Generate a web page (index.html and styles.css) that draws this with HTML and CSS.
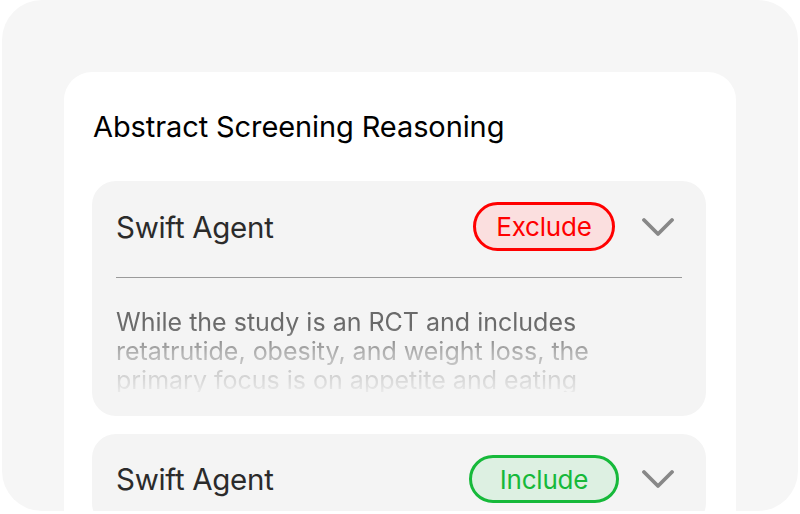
FILE: index.html
```html
<!DOCTYPE html>
<html>
<head>
<meta charset="utf-8">
<link rel="stylesheet" href="styles.css">
</head>
<body>
<div class="panel">
  <div class="card">
    <h1 class="title">Abstract Screening Reasoning</h1>
    <div class="item">
      <div class="head">
        <span class="agent">Swift Agent</span>
        <span class="pill pill-exclude">Exclude</span>
        <svg class="chev" width="32" height="20" viewBox="0 0 32 20"><polyline points="2,3 16,17 30,3" fill="none" stroke="#888" stroke-width="3.8" stroke-linecap="round" stroke-linejoin="round"/></svg>
      </div>
      <div class="divider"></div>
      <p class="reason">While the study is an RCT and includes retatrutide, obesity, and weight loss, the primary focus is on appetite and eating behavior rather than weight outcomes.</p>
    </div>
    <div class="item">
      <div class="head">
        <span class="agent">Swift Agent</span>
        <span class="pill pill-include">Include</span>
        <svg class="chev" width="32" height="20" viewBox="0 0 32 20"><polyline points="2,3 16,17 30,3" fill="none" stroke="#888" stroke-width="3.8" stroke-linecap="round" stroke-linejoin="round"/></svg>
      </div>
    </div>
  </div>
</div>
</body>
</html>
```
FILE: styles.css
```css
* { box-sizing: border-box; }
html, body { margin: 0; padding: 0; background: #fff; }
body { font-family: Inter, "Noto Sans", sans-serif; }

.panel {
  margin: 0 2px;
  height: 511px;
  border-radius: 40px;
  background: #f6f6f6;
  overflow: hidden;
  padding: 72px 62px 0 62px;
}

.card {
  background: #fff;
  border-radius: 28px 28px 0 0;
  padding: 37px 30px 40px 28px;
  min-height: 600px;
}

.title {
  margin: 0 0 37px 1px;
  font-size: 29px;
  line-height: 35px;
  font-weight: 400;
  color: #000;
  letter-spacing: -0.1px;
}

.item {
  background: #f4f4f4;
  border-radius: 24px;
  padding: 21px 32px 24px 24px;
  margin-bottom: 18px;
}

.head {
  display: flex;
  align-items: center;
}

.agent {
  flex: 1;
  font-size: 29.5px;
  line-height: 36px;
  color: #2b2b2b;
  letter-spacing: -0.3px;
}

.pill {
  display: flex;
  align-items: center;
  justify-content: center;
  border-radius: 25px;
  border: 3px solid;
  font-size: 26px;
  letter-spacing: -0.2px;
}

.pill-exclude {
  width: 142px;
  height: 49px;
  border-color: #ff0000;
  background: #fbdfdf;
  color: #ff0000;
  margin-right: 27px;
}

.pill-include {
  width: 150px;
  height: 48px;
  border-color: #16b93a;
  background: #ddf0e2;
  color: #16b93a;
  margin-right: 23px;
}

.chev { display: block; }

.divider {
  height: 1px;
  background: #9a9a9a;
  margin: 26px -8px 0 0;
}

.reason {
  margin: 30px 0 0 0;
  padding-right: 20px;
  height: 84px;
  overflow: hidden;
  font-size: 25px;
  line-height: 29px;
  color: #6a6a6a;
  -webkit-mask-image: linear-gradient(to bottom, #000 0%, #000 22%, rgba(0,0,0,0.45) 55%, rgba(0,0,0,0.08) 100%);
  mask-image: linear-gradient(to bottom, #000 0%, #000 22%, rgba(0,0,0,0.45) 55%, rgba(0,0,0,0.08) 100%);
}
```
